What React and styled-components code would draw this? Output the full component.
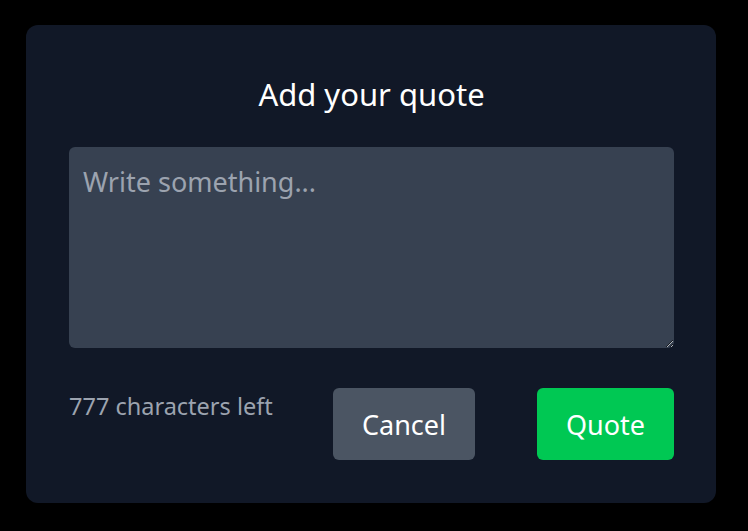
import React, { useState } from 'react';
import styled, { createGlobalStyle } from 'styled-components';

const GlobalStyle = createGlobalStyle`
  html, body {
    margin: 0;
    background: #000;
    font-family: 'Noto Sans', 'Open Sans', sans-serif;
  }
`;

const Page = styled.div`
  padding: 25px 32px 29px 26px;
`;

const Card = styled.div`
  background: #111827;
  border-radius: 12px;
  padding: 50px 42px 43px 43px;
  display: flex;
  flex-direction: column;
`;

const Title = styled.h2`
  margin: 0 0 34px;
  text-align: center;
  color: #fff;
  font-weight: 400;
  font-size: 31px;
  line-height: 38px;
`;

const TextArea = styled.textarea`
  box-sizing: border-box;
  width: 100%;
  height: 201px;
  background: #374151;
  border: none;
  border-radius: 6px;
  padding: 16px 14px;
  color: #fff;
  font-family: inherit;
  font-size: 27px;
  outline: none;
  &::placeholder {
    color: #9ca3af;
  }
`;

const Footer = styled.div`
  display: flex;
  align-items: flex-start;
  margin-top: 40px;
`;

const Counter = styled.span`
  flex: 1;
  color: #9ca3af;
  font-size: 23.5px;
  line-height: 36px;
`;

const Button = styled.button`
  height: 72px;
  width: ${(p) => p.$w}px;
  margin-left: ${(p) => p.$ml}px;
  border: none;
  border-radius: 6px;
  background: ${(p) => p.$bg};
  color: #fff;
  font-family: inherit;
  font-size: 27px;
  cursor: pointer;
`;

export default function App() {
  const [text, setText] = useState('');
  return (
    <>
      <GlobalStyle />
      <Page>
        <Card>
          <Title>Add your quote</Title>
          <TextArea
            placeholder='Write something...'
            value={text}
            onChange={(e) => setText(e.target.value)}
          />
          <Footer>
            <Counter>{777 - text.length} characters left</Counter>
            <Button $w={142} $ml={0} $bg='#4b5563'>Cancel</Button>
            <Button $w={137} $ml={62} $bg='#00c853'>Quote</Button>
          </Footer>
        </Card>
      </Page>
    </>
  );
}
